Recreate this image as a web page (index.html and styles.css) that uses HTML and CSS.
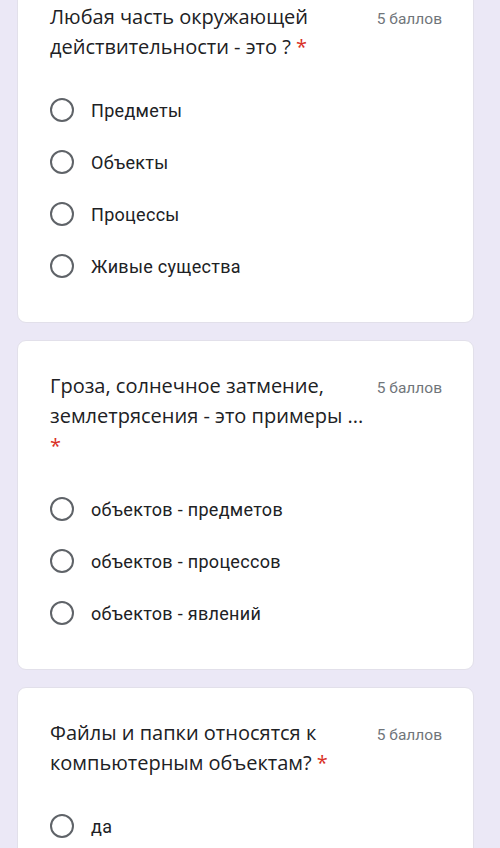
FILE: index.html
```html
<!DOCTYPE html>
<html lang="ru">
<head>
<meta charset="utf-8">
<title>Форма</title>
<link rel="stylesheet" href="styles.css">
</head>
<body>
<main class="page">
  <section class="card">
    <div class="head">
      <div class="title">Любая часть окружающей действительности - это ? <span class="req">*</span></div>
      <div class="points">5 баллов</div>
    </div>
    <div class="options">
      <div class="opt"><span class="radio"></span><span class="label">Предметы</span></div>
      <div class="opt"><span class="radio"></span><span class="label">Объекты</span></div>
      <div class="opt"><span class="radio"></span><span class="label">Процессы</span></div>
      <div class="opt"><span class="radio"></span><span class="label">Живые существа</span></div>
    </div>
  </section>
  <section class="card">
    <div class="head">
      <div class="title">Гроза, солнечное затмение, землетрясения - это примеры ... <span class="req">*</span></div>
      <div class="points">5 баллов</div>
    </div>
    <div class="options">
      <div class="opt"><span class="radio"></span><span class="label">объектов - предметов</span></div>
      <div class="opt"><span class="radio"></span><span class="label">объектов - процессов</span></div>
      <div class="opt"><span class="radio"></span><span class="label">объектов - явлений</span></div>
    </div>
  </section>
  <section class="card">
    <div class="head">
      <div class="title">Файлы и папки относятся к компьютерным объектам? <span class="req">*</span></div>
      <div class="points">5 баллов</div>
    </div>
    <div class="options">
      <div class="opt"><span class="radio"></span><span class="label">да</span></div>
    </div>
  </section>
</main>
</body>
</html>
```
FILE: styles.css
```css
html, body {
  margin: 0;
  padding: 0;
  background: #ebe8f6;
  overflow: hidden;
}
.page {
  display: flex;
  flex-direction: column;
  gap: 17px;
  padding: 0 26px 0 17px;
  margin-top: -29px;
}
.card {
  background: #ffffff;
  border: 1px solid #e2e0ea;
  border-radius: 9px;
  padding: 30px 31px 30px 32px;
}
.head {
  display: flex;
  align-items: baseline;
  gap: 8px;
}
.title {
  flex: 1;
  font-family: "Open Sans", sans-serif;
  font-size: 20px;
  line-height: 30px;
  color: #202124;
}
.req {
  color: #d93025;
}
.points {
  font-family: Roboto, sans-serif;
  font-size: 15.5px;
  color: #70757a;
  white-space: nowrap;
}
.options {
  margin-top: 22px;
  display: flex;
  flex-direction: column;
}
.opt {
  height: 52px;
  display: flex;
  align-items: center;
  gap: 17px;
}
.radio {
  width: 20px;
  height: 20px;
  border: 2px solid #5f6368;
  border-radius: 50%;
  flex: none;
}
.label {
  font-family: Roboto, sans-serif;
  font-size: 18px;
  letter-spacing: 0.3px;
  color: #202124;
}
```
